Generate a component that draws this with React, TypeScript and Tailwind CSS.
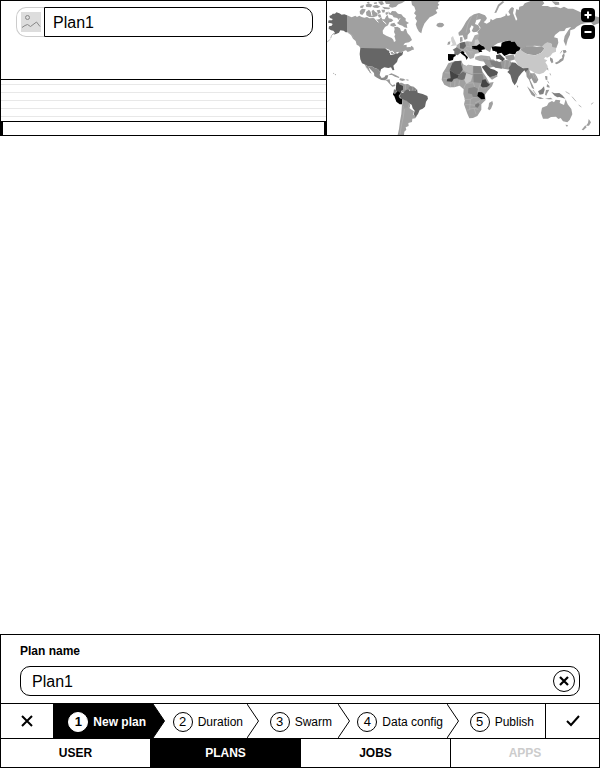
import { useState } from "react";

type Shape = { fill: string; d: string };

const land: Shape[] = [
  // North America
  { fill: "#666", d: "M63 46 55 43 47 44 40 40 31 37 27 41 20 41 17 45 10 48 12 54 20 57 18 61 8 61 6 68 16 70 20 72 17 77 9 79 8 86 15 91 22 92 27 98 22 104 30 102 39 98 43 91 53 92 59 97 63 97Z" },
  { fill: "#a0a0a0", d: "M63 46 70 49 77 52 88 47 93 51 100 47 107 51 115 53 123 51 130 55 142 54 152 59 161 57 165 50 169 58 176 58 181 48 185 45 188 55 196 56 202 61 197 65 190 67 186 76 177 81 170 92 171 101 181 107 197 114 202 119 204 126 209 123 207 114 205 109 208 104 204 96 206 87 204 82 214 80 222 85 225 93 232 94 235 88 240 86 244 99 252 108 258 120 249 127 237 129 232 136 242 134 242 142 252 141 262 148 253 153 245 156 240 151 231 154 225 159 216 160 207 166 196 163 191 150 179 145 103 144 99 138 92 134 89 123 81 116 75 105 69 99 63 97Z" },
  { fill: "#a0a0a0", d: "M101 34 108 26 119 28 116 36 109 45 102 42ZM120 36 129 29 134 35 142 29 148 36 155 40 154 48 142 52 130 51 121 46ZM152 31 161 29 165 37 157 42ZM166 29 177 29 176 37 170 38ZM103 18 114 15 111 23 103 24ZM119 14 128 10 139 14 135 22 121 21ZM139 18 152 14 163 20 155 24 144 23ZM156 5 169 3 174 12 165 16ZM168 20 180 22 194 23 189 28 175 27ZM176 3 237 3 228 9 217 13 210 20 198 23 188 19 192 12 180 12ZM187 34 193 40 198 33 209 34 216 41 226 43 232 50 239 55 239 63 249 69 242 73 244 84 235 82 229 77 220 74 213 69 219 63 214 54 203 52 199 46 188 43ZM194 71 205 68 211 77 202 80 193 77ZM256 137 262 142 264 149 250 148ZM122 7 129 5 131 9 124 10ZM143 8 152 6 153 11 145 12ZM155 44 163 43 166 50 159 53ZM178 38 185 35 186 42 180 45Z" },
  { fill: "#a0a0a0", d: "M256 3H342L335 9 340 14 335 19 337 26 329 30 334 39 321 47 311 52 302 62 295 71 289 86 286 100 279 95 273 85 269 73 273 63 267 54 271 47 264 40 269 32 265 20 258 15ZM333 71 340 68 350 69 355 75 348 82 338 82 331 77Z" },
  { fill: "#666", d: "M103 144 178 145 184 151 190 152 193 165 202 165 208 162 214 162 218 158 226 158 232 154 229 165 221 170 216 176 213 186 202 197 205 210 200 211 195 202 187 204 175 202 165 208 163 216 155 207 147 205 140 200 126 199 115 193 108 190 103 178 101 162Z" },
  { fill: "#8a8a8a", d: "M115 193 126 199 140 200 147 205 155 207 163 216 161 225 167 234 175 232 179 226 187 226 184 236 177 241 166 240 153 233 145 228 144 219 136 211 127 201 131 211 137 222 131 217 123 203Z" },
  { fill: "#999", d: "M177 240 191 238 193 250 199 256 207 253 208 258 199 260 191 252 183 243ZM187 225 196 220 207 224 220 231 219 234 207 230 198 225ZM222 235 233 236 239 240 229 243 220 240ZM241 238 248 239 247 242 241 241Z" },
  // South America
  { fill: "#999", d: "M216 249 227 248 236 253 246 252 254 258 250 267 238 272 232 278 222 271ZM228 297 240 300 253 314 251 323 236 327 229 315Z" },
  { fill: "#858585", d: "M252 258 263 260 271 267 267 273 252 273 247 264Z" },
  { fill: "#a0a0a0", d: "M228 311 236 324 247 322 257 329 264 334 261 344 272 349 268 355 259 356 258 366 247 369 248 378 239 382 241 389 235 395 234 405H215L219 387 222 364 226 342Z" },
  { fill: "#666", d: "M226 279 233 278 236 272 247 267 251 273 267 273 273 267 275 278 290 282 304 288 306 296 300 305 297 320 290 326 281 330 276 342 269 351 263 343 266 332 260 325 257 314 249 310 241 302 229 298 219 289Z" },
  { fill: "#444", d: "M211 248 218 246 220 253 231 258 231 269 225 272 227 279 218 281 209 272 210 259Z" },
  { fill: "#777", d: "M204 268 212 271 209 279 202 280Z" },
  { fill: "#000", d: "M211 277 216 274 224 280 218 288 222 295 228 296 228 313 221 313 211 305 205 289 201 284 202 278 207 281Z" },
  // Europe
  { fill: "#a0a0a0", d: "M399 107 397 98 406 89 413 78 420 65 431 51 444 43 459 39 477 46 483 55 475 62 464 57 451 60 447 72 457 76 462 86 454 95 443 97 437 93 443 80 437 76 431 86 433 96 425 105 424 116 416 120 410 106ZM402 112 409 111 410 124 402 126ZM366 126 373 124 372 133 364 135Z" },
  { fill: "#d1d1d1", d: "M375 113 381 108 384 116 389 127 392 136 373 139 380 132 376 123Z" },
  { fill: "#aaa", d: "M392 136 402 128 413 127 423 124 437 125 446 106 459 102 471 107 476 122 472 138 451 139 460 159 447 162 443 174 432 177 423 165 416 153 402 153 391 145ZM448 170 465 166 491 169 497 180 489 187 461 183 447 178Z" },
  { fill: "#777", d: "M380 149 392 142 405 151 402 160 395 166 385 163 385 154Z" },
  { fill: "#666", d: "M402 129 416 125 420 138 412 147 402 145Z" },
  { fill: "#c8c8c8", d: "M447 119 457 118 462 129 455 136 445 134Z" },
  { fill: "#000", d: "M366 162 389 163 389 168 383 171 381 180 370 183 366 180ZM402 157 408 153 416 155 414 160 426 172 422 180 418 170 407 162ZM438 138 452 138 460 132 467 137 477 140 477 148 466 150 469 155 459 157 456 149 438 147Z" },
  // Russia and central Asia
  { fill: "#a0a0a0", d: "M466 47 480 51 481 59 473 67 482 71 492 65 494 56 500 61 511 55 524 53 538 47 540 40 545 48 553 45 547 35 552 26 558 21 564 25 561 39 570 62 574 58 568 43 571 27 578 30 580 20 591 17 596 10 614 3 650 3 655 10 647 18 665 18 674 22 690 20 704 25 714 20 726 26 741 26 764 37 819 52V70L803 76 795 68 777 70 765 73 752 80 745 87 733 91 732 104 725 119 720 139 713 123 716 108 727 91 735 81 720 85 715 93 701 94 687 105 684 112 695 115 697 128 691 144 683 154 676 132 664 128 652 140 626 137 608 140 583 147 568 133 544 122 515 130 497 142 492 157 477 148 474 139 463 132 456 118 460 105 454 97 464 84 456 73 463 63ZM505 39 516 14 530 3 535 6 520 19 511 38ZM610 3 630 3 624 9ZM677 4 699 6 700 14 688 15ZM678 122 680 113 683 120 681 146 678 140Z" },
  { fill: "#999", d: "M583 147 603 139 616 137 633 141 648 139 656 145 645 159 628 166 604 163 586 154ZM470 178 490 180 504 178 519 186 538 180 551 181 559 191 550 209 520 204 503 200 491 203 479 194ZM537 168 562 163 569 178 553 182 541 178Z" },
  { fill: "#808080", d: "M491 181 504 183 524 187 528 206 508 203 496 194Z" },
  { fill: "#000", d: "M497 140 508 139 525 140 527 128 538 124 553 122 556 126 566 125 574 138 583 143 580 153 571 155 568 163 550 161 535 168 526 158 514 162 512 155 500 153Z" },
  { fill: "#fff", d: "M497 152 507 153 506 162 513 172 509 184 501 177 502 166Z" },
  { fill: "#4c4c4c", d: "M510 166 522 163 537 177 530 184 519 177 511 178Z" },
  { fill: "#c8c8c8", d: "M567 164 574 154 584 149 596 158 608 164 628 166 646 158 656 145 647 140 656 131 664 127 676 130 679 141 690 143 690 155 680 159 673 168 664 173 658 171 654 177 664 181 658 187 665 198 664 207 653 218 640 223 626 219 617 213 603 207 586 202 576 195 570 185 565 178Z" },
  { fill: "#666", d: "M548 203 555 195 557 187 568 188 576 196 591 205 607 204 608 211 600 218 595 211 587 219 578 230 572 247 566 256 559 245 553 224 544 216 550 210Z" },
  { fill: "#999", d: "M600 214 608 208 614 220 626 220 632 229 637 239 631 249 624 250 616 235 612 239 621 257 625 268 618 264 609 239 602 230ZM572 254 577 260 574 263ZM672 172 680 176 682 187 677 190 672 181ZM686 189 697 184 702 178 709 174 708 167 714 159 716 166 712 181 701 188 692 193ZM710 151 719 150 722 156 713 161ZM663 207 666 202 667 212ZM657 228 664 229 664 240 659 239ZM663 252 670 257 671 263 662 261ZM603 259 614 269 628 284 627 291 617 285ZM628 290 644 292 654 296 642 297ZM660 270 670 269 664 280 661 287 657 284ZM657 296 674 293 680 298 668 298Z" },
  { fill: "#808080", d: "M636 274 646 268 654 259 656 269 652 282 641 284ZM676 276 686 280 700 279 709 286 718 296 708 293 700 291 694 292 686 287Z" },
  // Middle East and Africa
  { fill: "#555", d: "M467 200 480 194 494 206 505 209 516 216 513 225 493 233 485 226Z" },
  { fill: "#999", d: "M490 232 513 225 515 229 498 239Z" },
  { fill: "#a0a0a0", d: "M367 190 385 184 406 182 411 193 421 198 428 194 442 197 465 199 470 216 480 230 490 248 503 246 498 259 485 273 477 284 479 300 466 313 466 329 454 348 441 354 430 355 424 341 420 330 414 313 417 300 412 282 413 268 401 257 385 262 370 262 355 254 347 239 350 219 359 205ZM488 319 489 309 499 303 501 311 495 326 490 331 485 326Z" },
  { fill: "#5b5b5b", d: "M379 190 387 184 406 182 405 192 410 209 401 222 389 223 371 209Z" },
  { fill: "#444", d: "M371 210 389 222 400 224 395 234 383 237 378 245 362 244 364 236 374 235Z" },
  { fill: "#6e6e6e", d: "M398 224 411 215 420 220 419 236 408 240 394 237Z" },
  { fill: "#b8b8b8", d: "M411 194 421 198 428 194 441 199 440 223 421 217 411 211Z" },
  { fill: "#c8c8c8", d: "M421 219 440 226 435 244 421 252 415 240Z" },
  { fill: "#858585", d: "M442 198 464 199 469 219H442ZM442 221H469L473 234 465 249 443 247ZM427 265 446 261 456 267 453 281 455 292 441 292 438 283 426 280Z" },
  { fill: "#444", d: "M469 239 479 238 483 247 492 254 483 261 470 263 464 257Z" },
  { fill: "#000", d: "M456 276 468 277 475 283 477 297 466 298 454 288Z" },
  { fill: "#777", d: "M447 314 457 309 461 314 455 323 448 320Z" },
  // Oceania
  { fill: "#a0a0a0", d: "M648 323 663 317 668 308 678 303 684 307 689 299 703 301 701 309 714 315 719 298 725 313 736 327 739 343 731 360 724 367 711 364 704 354 697 357 690 350 675 351 666 356 651 356 645 339ZM718 374 726 375 723 381ZM788 357 795 367 789 377 780 377 786 369ZM778 376 782 382 772 391 767 389Z" },
];

const coastLines =
  "M25 98 17 106 14 115M12 118 3 127M67 99 79 105 83 114M119 200 125 207 134 219M719 275 731 282M738 290 750 304M758 315 766 321M795 313 802 308M672 220 674 226M621 270 632 286M664 242 669 250M703 160 708 152";

const borders =
  "M438 47 426 72 420 98M455 45 450 61M429 126 435 144 448 150M421 139 442 142M425 154 442 156M419 146 437 162M357 218 371 219M352 235 365 235M374 247 373 262M387 242 386 261M401 241 398 257M419 251 413 266M419 251 442 248 446 261M464 250 457 267 456 278M465 263 480 264M414 299 433 298 441 293M433 298 432 314 416 314M432 314 447 316M432 314 431 329 421 331M431 327 444 325 457 328M444 325 450 342M447 309 462 302M441 292 454 293M250 313 247 322M235 327 232 350 226 378 222 403M238 252 238 269M261 260 260 271M610 208 611 226M619 219 625 235M625 220 632 239M486 169 488 180M538 180 536 203M551 181 548 203M600 139 642 138";

function WorldMap() {
  return (
    <svg viewBox="3 3 816 402" className="block h-full w-full" preserveAspectRatio="xMidYMid slice" role="img" aria-label="World map">
      {land.map((s, i) => (
        <path key={i} d={s.d} fill={s.fill} />
      ))}
      <path d={borders} fill="none" stroke="#bdbdbd" strokeWidth="1.5" />
      <path d={coastLines} fill="none" stroke="#aaa" strokeWidth="2.5" />
      <path d="M170 62 181 72M148 57 157 67M222 55 214 66M135 33 138 48M193 27 190 35M213 18 224 21M189 157 199 153 205 161M211 158 218 157" fill="none" stroke="#fff" strokeWidth="3" />
      <path d="M22 220 32 226" stroke="#999" strokeWidth="3" strokeDasharray="3 3" />
    </svg>
  );
}

const steps = [
  { label: "New plan", pad: "pr-[7px]" },
  { label: "Duration", pad: "pr-1" },
  { label: "Swarm", pad: "pr-1.5" },
  { label: "Data config", pad: "pr-1" },
  { label: "Publish", pad: "pr-[11px]" },
];
const tabs = ["USER", "PLANS", "JOBS", "APPS"];

export default function App() {
  const [name, setName] = useState("Plan1");
  return (
    <div className="flex min-h-screen flex-col bg-white font-['Liberation_Sans',Arial,sans-serif] text-xs text-black">
      <header className="grid h-34 grid-cols-[327fr_273fr] border-y border-black">
        <section className="flex flex-col border-x border-black">
          <div className="flex h-[78px] items-start pt-1.5 pr-[13px] pl-[15px]">
            <button aria-label="Plan image" className="flex h-[30px] w-7 items-center justify-center rounded-l-[10px] border border-r-0 border-[#ccc] pl-px">
              <svg viewBox="0 0 20 20" className="size-5 shrink-0 bg-[#ddd]" fill="none" stroke="#888">
                <circle cx="6.5" cy="5.5" r="2" />
                <path d="M1 15.5 4 13.5 6.5 12.5 9.5 14.5 15.5 10 19 14.5" />
              </svg>
            </button>
            <input
              aria-label="Plan title"
              value={name}
              onChange={(e) => setName(e.target.value)}
              className="h-[30px] min-w-0 flex-1 rounded-r-[10px] border border-black px-2 pt-0.5 text-base outline-none"
            />
          </div>
          <div className="flex-1 border-t border-black">
            <div className="h-[5px] border-b border-[#e8e8e8]" />
            <div className="h-2 border-b border-[#e8e8e8]" />
            <div className="h-2 border-b border-[#e8e8e8]" />
            <div className="h-2 border-b border-[#e8e8e8]" />
            <div className="h-2 border-b border-[#e8e8e8]" />
          </div>
          <div className="h-3.5 border-x-2 border-t border-black" />
        </section>
        <section className="relative min-h-0 overflow-hidden border-r border-black">
          <WorldMap />
          <div className="absolute top-[7px] right-1 flex flex-col gap-[3px]">
            <button aria-label="Zoom in" className="size-3.5 rounded bg-black">
              <svg viewBox="0 0 14 14" className="size-3.5" stroke="#fff" strokeWidth="2">
                <path d="M3.5 7h7M7 3.5v7" />
              </svg>
            </button>
            <button aria-label="Zoom out" className="size-3.5 rounded bg-black">
              <svg viewBox="0 0 14 14" className="size-3.5" stroke="#fff" strokeWidth="2">
                <path d="M3.5 7h7" />
              </svg>
            </button>
          </div>
        </section>
      </header>

      <main className="flex-1" />

      <footer className="border border-black">
        <div className="flex flex-col gap-[7px] px-[19px] pt-2 pb-[7px]">
          <label htmlFor="plan-name" className="font-bold leading-4">
            Plan name
          </label>
          <div className="flex h-[30px] items-center rounded-[10px] border border-black pr-1 pl-[11px]">
            <input
              id="plan-name"
              value={name}
              onChange={(e) => setName(e.target.value)}
              className="min-w-0 flex-1 pt-0.5 text-base outline-none"
            />
            <button aria-label="Clear plan name" onClick={() => setName("")} className="flex size-[22px] items-center justify-center rounded-full border border-black">
              <svg viewBox="0 0 10 10" className="size-2.5" stroke="#000" strokeWidth="2.2">
                <path d="M1 1 9 9M9 1 1 9" />
              </svg>
            </button>
          </div>
        </div>

        <div className="flex h-9 border-y border-black">
          <button aria-label="Cancel" className="flex w-13 items-center justify-center">
            <svg viewBox="0 0 12 12" className="size-3" stroke="#000" strokeWidth="2">
              <path d="M1 1 11 11M11 1 1 11" />
            </svg>
          </button>
          <ol className="grid flex-1 grid-cols-[112fr_94fr_91fr_109fr_86fr]">
            {steps.map((step, i) => {
              const active = i === 0;
              return (
                <li key={step.label} className="flex">
                  <button
                    aria-current={active ? "step" : undefined}
                    className={`flex flex-1 items-center justify-end gap-[5px] pt-0.5 whitespace-nowrap ${step.pad} ${
                      active ? "bg-black font-bold text-white" : ""
                    }`}
                  >
                    <span
                      className={`flex size-5 items-center justify-center rounded-full border text-[13px] ${
                        active ? "border-white bg-white text-black" : "border-black"
                      }`}
                    >
                      {i + 1}
                    </span>
                    {step.label}
                  </button>
                  {i < 4 && (
                    <svg viewBox="0 0 12 34" className="h-full w-3" fill={active ? "#000" : "none"} stroke="#000">
                      <path d="M0 0 11.5 17 0 34" />
                    </svg>
                  )}
                </li>
              );
            })}
          </ol>
          <button aria-label="Confirm" className="flex w-[54px] items-center justify-center border-l border-black">
            <svg viewBox="0 0 14 12" className="h-3 w-3.5" fill="none" stroke="#000" strokeWidth="2">
              <path d="M1 6 5 10 13 1" />
            </svg>
          </button>
        </div>

        <nav className="grid h-7 grid-cols-[149fr_151fr_149fr_149fr]">
          {tabs.map((tab) => (
            <button
              key={tab}
              disabled={tab === "APPS"}
              className={`font-bold ${
                tab === "PLANS" ? "bg-black text-white" : tab === "APPS" ? "border-l border-black text-[#ccc]" : ""
              }`}
            >
              {tab}
            </button>
          ))}
        </nav>
      </footer>
    </div>
  );
}
